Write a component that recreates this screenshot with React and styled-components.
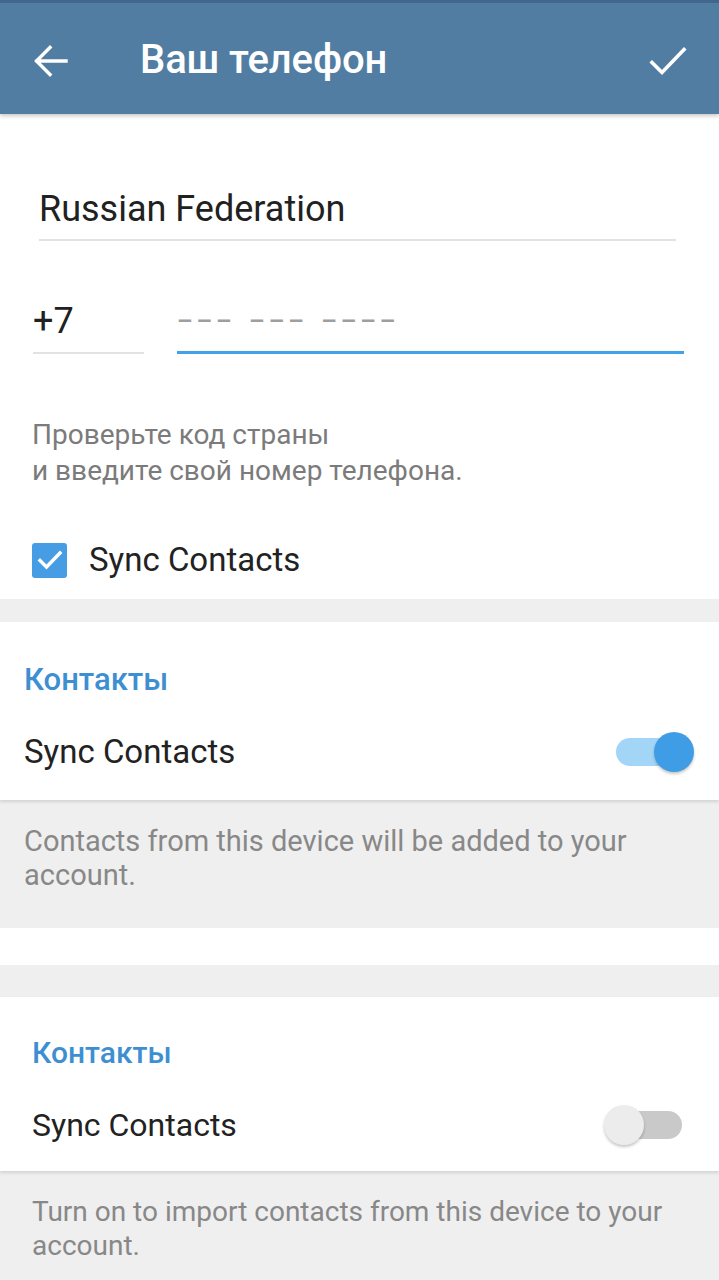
import React from "react";
import styled, { createGlobalStyle } from "styled-components";

const GlobalStyle = createGlobalStyle`
  body {
    margin: 0;
    background: #ffffff;
    font-family: Roboto, "Noto Sans", sans-serif;
  }
`;

const App = () => {
  return (
    <Page>
      <GlobalStyle />
      <AppBar>
        <IconButton aria-label="back">
          <svg width="34" height="32" viewBox="0 0 34 32" fill="none">
            <path
              d="M32 16H3M16 2.5L2.5 16 16 29.5"
              stroke="#fff"
              strokeWidth="3.4"
              strokeLinecap="square"
            />
          </svg>
        </IconButton>
        <Title>Ваш телефон</Title>
        <IconButton aria-label="done">
          <svg width="38" height="30" viewBox="0 0 38 30" fill="none">
            <path
              d="M3 16.5L13 26.5 35 3.5"
              stroke="#fff"
              strokeWidth="3.6"
              strokeLinecap="square"
            />
          </svg>
        </IconButton>
      </AppBar>

      <Form>
        <CountryField>Russian Federation</CountryField>
        <PhoneRow>
          <CodeField>+7</CodeField>
          <NumberField>——— ——— ————</NumberField>
        </PhoneRow>
        <Hint>
          Проверьте код страны
          <br />и введите свой номер телефона.
        </Hint>
        <CheckRow>
          <CheckBox>
            <svg width="26" height="22" viewBox="0 0 26 22" fill="none">
              <path
                d="M3 11.5L9.5 18 23 4"
                stroke="#fff"
                strokeWidth="3.4"
                strokeLinecap="square"
              />
            </svg>
          </CheckBox>
          <RowLabel>Sync Contacts</RowLabel>
        </CheckRow>
      </Form>

      <Gap $h={23} />

      <Section $inset={24}>
        <SectionHeader>Контакты</SectionHeader>
        <SwitchRow>
          <RowLabel>Sync Contacts</RowLabel>
          <Switch $on>
            <Knob $on />
          </Switch>
        </SwitchRow>
      </Section>
      <Info $inset={24} $h={128}>
        Contacts from this device will be added to your account.
      </Info>
      <Spacer />
      <Gap $h={32} />

      <Section $inset={32} $second>
        <SectionHeader $small>Контакты</SectionHeader>
        <SwitchRow>
          <RowLabel $small>Sync Contacts</RowLabel>
          <Switch>
            <Knob />
          </Switch>
        </SwitchRow>
      </Section>
      <Info $inset={32} $h={109} $small>
        Turn on to import contacts from this device to your account.
      </Info>
    </Page>
  );
};

export default App;

const Page = styled.div`
  width: 719px;
  height: 1280px;
  overflow: hidden;
  background: #ffffff;
`;

const AppBar = styled.header`
  position: relative;
  z-index: 1;
  height: 111px;
  border-top: 3px solid #41688c;
  background: #527da3;
  display: flex;
  align-items: center;
  padding: 0 30px 0 30px;
  box-shadow: 0 2px 4px rgba(0, 0, 0, 0.22);
`;

const IconButton = styled.div`
  display: flex;
  align-items: center;
  justify-content: center;
  width: 42px;
  height: 42px;
  padding-top: 4px;
`;

const Title = styled.h1`
  flex: 1;
  margin: 0 0 0 68px;
  padding-top: 2px;
  color: #ffffff;
  font-size: 40px;
  font-weight: 500;
  letter-spacing: -0.1px;
`;

const Form = styled.div`
  padding: 75px 35px 0 33px;
  height: 485px;
  box-sizing: border-box;
`;

const CountryField = styled.div`
  margin: 0 8px 0 6px;
  padding-bottom: 10px;
  border-bottom: 2px solid #e2e2e2;
  color: #212121;
  font-size: 36px;
  line-height: 40px;
`;

const PhoneRow = styled.div`
  display: flex;
  gap: 33px;
  margin-top: 60px;
`;

const CodeField = styled.div`
  width: 111px;
  padding-bottom: 11px;
  border-bottom: 2px solid #e2e2e2;
  color: #212121;
  font-size: 36px;
  line-height: 40px;
`;

const NumberField = styled.div`
  flex: 1;
  padding: 0 0 10px 1px;
  border-bottom: 3px solid #40a2e8;
  color: #9e9e9e;
  font-size: 18px;
  font-weight: 900;
  line-height: 40px;
  letter-spacing: 6px;
  word-spacing: 3px;
`;

const Hint = styled.p`
  margin: 63px 0 0 -1px;
  color: #7b7b7b;
  font-size: 28px;
  line-height: 36px;
`;

const CheckRow = styled.div`
  display: flex;
  align-items: center;
  gap: 22px;
  margin-top: 51px;
  margin-left: -1px;
`;

const CheckBox = styled.div`
  width: 35px;
  height: 35px;
  border-radius: 3px;
  background: #469de3;
  display: flex;
  align-items: center;
  justify-content: center;
`;

const RowLabel = styled.span`
  color: #222222;
  font-size: ${(p) => (p.$small ? 32 : 33)}px;
  line-height: 40px;
`;

const Gap = styled.div`
  height: ${(p) => p.$h}px;
  background: #efefef;
`;

const Section = styled.section`
  position: relative;
  height: ${(p) => (p.$second ? 174 : 178)}px;
  box-sizing: border-box;
  padding: ${(p) => (p.$second ? 38 : 40)}px ${(p) => (p.$second ? 37 : 25)}px 0
    ${(p) => p.$inset}px;
  background: #ffffff;
  box-shadow: 0 2px 3px rgba(0, 0, 0, 0.12);
`;

const SectionHeader = styled.h2`
  margin: 0;
  color: #3e8fd2;
  font-size: ${(p) => (p.$small ? 30 : 31)}px;
  font-weight: 500;
  line-height: 36px;
`;

const SwitchRow = styled.div`
  display: flex;
  align-items: center;
  justify-content: space-between;
  margin-top: 34px;
`;

const Switch = styled.div`
  position: relative;
  width: 64px;
  height: 28px;
  border-radius: 14px;
  background: ${(p) => (p.$on ? "#a3d5f7" : "#c9c9c9")};
  margin-right: ${(p) => (p.$on ? 14 : 0)}px;
`;

const Knob = styled.div`
  position: absolute;
  top: -6px;
  ${(p) => (p.$on ? "right: -14px;" : "left: -14px;")}
  width: 40px;
  height: 40px;
  border-radius: 50%;
  background: ${(p) => (p.$on ? "#3f9de6" : "#ececec")};
  box-shadow: 0 2px 3px rgba(0, 0, 0, 0.22);
`;

const Info = styled.div`
  height: ${(p) => p.$h}px;
  box-sizing: border-box;
  padding: 24px 40px 0 ${(p) => p.$inset}px;
  background: #efefef;
  color: #888888;
  font-size: ${(p) => (p.$small ? 28 : 29)}px;
  line-height: 34px;
`;

const Spacer = styled.div`
  height: 37px;
  background: #ffffff;
`;
